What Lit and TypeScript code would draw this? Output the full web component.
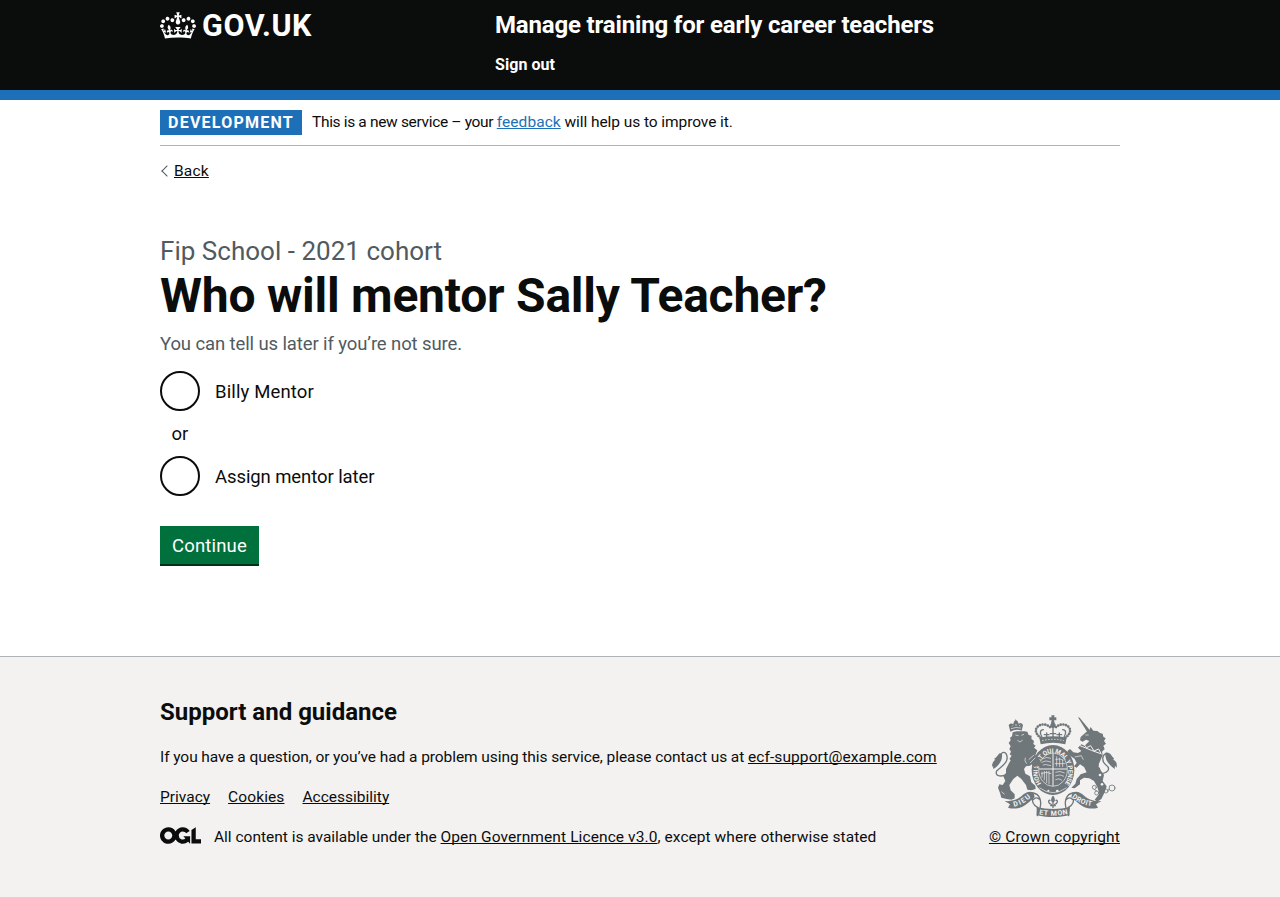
import { LitElement, html, css, svg } from "lit";
import { customElement, property } from "lit/decorators.js";

const CROWN =
  "M25 30.2c3.5 1.5 7.7-.2 9.1-3.7 1.5-3.6-.2-7.8-3.9-9.2-3.6-1.4-7.6.3-9.1 3.9-1.4 3.5.3 7.5 3.9 9zM9 39.5c3.6 1.5 7.8-.2 9.2-3.7 1.5-3.6-.2-7.8-3.9-9.1-3.6-1.5-7.6.2-9.1 3.8-1.4 3.5.3 7.5 3.8 9zM4.4 57.2c3.5 1.5 7.7-.2 9.1-3.8 1.5-3.6-.2-7.7-3.9-9.1-3.5-1.5-7.6.3-9.1 3.8-1.4 3.5.3 7.6 3.9 9.1zm38.3-21.4c3.5 1.5 7.7-.2 9.1-3.8 1.5-3.6-.2-7.7-3.9-9.1-3.6-1.5-7.6.3-9.1 3.8-1.3 3.6.4 7.7 3.9 9.1zm64.4-5.6c-3.6 1.5-7.8-.2-9.1-3.7-1.5-3.6.2-7.8 3.8-9.2 3.6-1.4 7.7.3 9.2 3.9 1.3 3.5-.4 7.5-3.9 9zm15.9 9.3c-3.6 1.5-7.7-.2-9.1-3.7-1.5-3.6.2-7.8 3.7-9.1 3.6-1.5 7.7.2 9.2 3.8 1.5 3.5-.3 7.5-3.8 9zm4.7 17.7c-3.6 1.5-7.8-.2-9.2-3.8-1.5-3.6.2-7.7 3.9-9.1 3.6-1.5 7.7.3 9.2 3.8 1.3 3.5-.4 7.6-3.9 9.1zM89.3 35.8c-3.6 1.5-7.8-.2-9.2-3.8-1.4-3.6.2-7.7 3.9-9.1 3.6-1.5 7.7.3 9.2 3.8 1.4 3.6-.3 7.7-3.9 9.1zM69.7 17.7l8.9 4.7V9.3l-8.9 2.8c-.2-.3-.5-.6-.9-.9L72.4 0H59.6l3.5 11.2c-.3.3-.6.5-.9.9l-8.8-2.8v13.1l8.8-4.7c.3.3.6.7.9.9l-5 15.4v.1c-.2.8-.4 1.6-.4 2.4 0 4.1 3.1 7.5 7 8.1h.2c.3 0 .7.1 1 .1.4 0 .7 0 1-.1h.2c4-.6 7.1-4.1 7.1-8.1 0-.8-.1-1.7-.4-2.4V34l-5.1-15.4c.4-.2.7-.6 1-.9zM66 92.8c16.9 0 32.8 1.1 47.1 3.2 4-16.9 8.9-26.7 14-33.5l-9.6-3.4c1 4.9 1.1 7.2 0 10.2-1.5-1.4-3-4.3-4.2-8.7L108.6 76c2.8-2 5-3.2 7.5-3.3-4.4 9.4-10 11.9-13.6 11.2-4.3-.8-6.3-4.6-5.6-7.9 1-4.7 5.7-5.9 8-.5 4.3-8.7-3-11.4-7.6-8.8 7.1-7.2 7.9-13.5 2.1-21.1-8 6.1-8.1 12.3-4.5 20.8-4.7-5.4-12.1-2.5-9.5 6.2 3.4-5.2 7.9-2 7.2 3.1-.6 4.3-6.4 7.8-13.5 7.2-10.3-.9-10.9-8-11.2-13.8 2.5-.5 7.1 1.8 11 7.3L80.2 60c-4.1 4.4-8 5.3-12.3 5.4 1.4-4.4 8-11.6 8-11.6H55.5s6.4 7.2 7.9 11.6c-4.2-.1-8-1-12.3-5.4l1.4 16.4c3.9-5.5 8.5-7.7 10.9-7.3-.3 5.8-.9 12.8-11.1 13.8-7.2.6-12.9-2.9-13.5-7.2-.7-5 3.8-8.3 7.1-3.1 2.7-8.7-4.6-11.6-9.4-6.2 3.7-8.5 3.6-14.7-4.6-20.8-5.8 7.6-5 13.9 2.2 21.1-4.7-2.6-11.9.1-7.7 8.8 2.3-5.5 7.1-4.2 8.1.5.7 3.3-1.3 7.1-5.7 7.9-3.5.7-9-1.8-13.5-11.2 2.5.1 4.7 1.3 7.5 3.3l-4.7-15.4c-1.2 4.4-2.7 7.2-4.3 8.7-1.1-3-.9-5.3 0-10.2l-9.5 3.4c5 6.9 9.9 16.7 14 33.5 14.8-2.1 30.8-3.2 47.7-3.2z";

const OGL =
  "M421.5 142.8V.1l-50.7 32.3v161.1h112.4v-50.7zm-122.3-9.6A47.12 47.12 0 0 1 221 97.8c0-26 21.1-47.1 47.1-47.1 16.7 0 31.4 8.7 39.7 21.8l42.7-27.2A97.63 97.63 0 0 0 268.1 0c-36.5 0-68.3 20.1-85.1 49.7A98 98 0 0 0 97.8 0C43.9 0 0 43.9 0 97.8s43.9 97.8 97.8 97.8c36.5 0 68.3-20.1 85.1-49.7a97.76 97.76 0 0 0 149.6 25.4l19.4 22.2h3v-87.8h-80l24.3 27.5zM97.8 145c-26 0-47.1-21.1-47.1-47.1s21.1-47.1 47.1-47.1 47.1 21.1 47.1 47.1S123.8 145 97.8 145";

@customElement("royal-arms")
class RoyalArms extends LitElement {
  static styles = css`
    :host { display: block; width: 125px; height: 102px; }
    svg { display: block; width: 125px; height: 102px; }
    .ink { fill: #6f777b; }
    .paper { fill: #f3f2f1; }
    .line { fill: none; stroke: #6f777b; stroke-width: 4; stroke-linecap: round; stroke-linejoin: round; }
    .thin { stroke-width: 2.5; }
    .dots { fill: none; stroke: #6f777b; stroke-width: 8; stroke-linecap: round; stroke-dasharray: 0 8; }
    .cut { fill: none; stroke: #f3f2f1; stroke-width: 3; }
    .fine { stroke-width: 2; }
    text { font: 700 21px "Roboto", sans-serif; fill: #f3f2f1; }
    .motto { font-size: 19px; }
  `;

  private halfCrown() {
    return svg`
      <path class="dots" d="M182 98C168 88 164 76 171 67C182 54 204 56 215 72" />
      <path class="line" d="M186 96C178 84 180 74 190 74M200 98V84M193 89H207" />
    `;
  }

  private fold() {
    return svg`
      <path class="line" d="M158 272C154 292 160 302 174 308L172 332M160 264C178 268 186 284 180 310M160 284C164 278 172 276 180 284" />
    `;
  }

  render() {
    return html`<svg viewBox="36 30 375 306" aria-hidden="true">
      <defs>
        <path id="garter" d="M184 236A46 56 0 1 1 254 236" />
        <path id="ribbon-left" d="M94 306C122 303 138 291 160 271" />
        <path id="ribbon-mid" d="M174 327C204 334 234 334 268 326" />
        <path id="ribbon-right" d="M272 275C296 295 320 304 352 304" />
      </defs>

      <path class="ink" d="M214 31H224L222 37H229V46H222L224 54L219 60L213 54L215 46H208V37H215Z" />
      <circle class="ink" cx="219" cy="61" r="8" />
      <path class="line" d="M219 62V96M211 86H227" />
      ${this.halfCrown()}
      <g transform="matrix(-1 0 0 1 438 0)">${this.halfCrown()}</g>
      <path class="ink" d="M178 98Q219 90 260 98L256 118Q219 108 182 118Z" />
      <path class="cut fine" d="M186 107Q219 99 252 107" stroke-dasharray="5 4" />

      <ellipse class="ink" cx="219" cy="195" rx="64" ry="75" />
      <ellipse class="cut fine" cx="219" cy="194" rx="43" ry="50" />
      <text class="motto"><textPath href="#garter" textLength="238" lengthAdjust="spacing">HONI SOIT QUI MAL Y PENSE</textPath></text>
      <path class="cut" d="M219 145V243M177 192H261" />
      <path class="cut fine" d="M187 162Q200 154 213 160M184 172Q198 164 213 171M182 182Q196 175 213 182M230 154V184M239 158V186M248 164V186M226 164Q240 158 250 166M224 176H256M186 200V218M193 198V226M200 198V234M207 198V238M183 206Q200 198 214 206M226 202Q240 196 254 204M226 213Q240 206 252 214M226 224Q238 218 246 226" />
      <path class="cut fine" d="M178 248Q219 278 260 248" />
      <circle class="paper" cx="205" cy="257" r="3" /><circle class="paper" cx="232" cy="258" r="4" />

      <path class="ink" d="M91 80L86 60C90 54 96 54 100 58C101 50 104 48 106 46L107 42L109 46C112 48 115 50 116 57C120 52 126 54 129 60L125 77Q108 71 91 80Z" />
      <path class="cut fine" d="M93 71Q108 65 123 69M96 64L99 61M108 63V57M117 63L121 60" />
      <path class="ink" d="M98 82L110 79L134 79L142 80L146 90L155 92L154 101L162 108L160 117L167 122L162 128L172 136L166 150L177 160L184 174L190 180L183 188L174 182L162 186L156 178L150 182L138 184L132 192L136 206L150 214L154 232L166 242L167 252L154 256L142 254L138 240L124 222L112 212L100 222L88 240L92 256L104 268L104 280L94 284L80 282L64 278L60 264L54 248L58 238L68 240L76 228L70 214L78 204L78 192L86 176L92 166L88 162L95 152L89 148L93 140L88 132L92 124L86 114L92 106L90 98L96 94Z" />
      <path class="cut fine" d="M106 90L116 92M124 91L132 88M112 106L120 111L128 105M162 150L146 164M166 158L150 174M64 260L74 268M140 176Q132 168 136 158" />
      <path class="line" d="M80 208C60 218 44 212 50 198C62 184 88 174 80 150C76 138 62 140 64 152" />
      <path class="ink" d="M66 148C68 168 56 180 44 190C36 194 40 186 40 182L36 186C36 174 40 168 46 164L42 162C52 156 52 150 60 144Z" />

      <path class="ink" d="M294 37L299 38L331 77L322 82Z" />
      <path class="ink" d="M318 82L328 76L332 66L340 77L352 78L360 84L368 86L370 95L377 100L372 108L378 116L370 122L374 132L366 140L368 150L362 164L356 178L362 196L372 210L368 228L380 244L374 262L364 282L352 290L344 284L358 266L352 246L342 228L328 220L312 218L300 226L300 238L284 250L274 248L286 236L290 222L302 208L320 202L312 186L300 178L290 188L282 184L290 174L284 162L268 150L262 138L270 132L280 142L294 144L304 138L294 128L304 118L314 122L328 108L318 104L308 110L300 106L302 96Z" />
      <path class="cut" d="M300 122L334 136L362 146M308 114L320 128L332 122L342 138L356 132L364 148" />
      <path class="cut fine" d="M316 90L326 90M284 156L304 152L310 164" />
      <path class="line" d="M366 206C386 202 392 190 378 180C364 168 366 150 378 146C386 144 388 152 382 156" />
      <path class="ink" d="M376 143C392 140 394 154 402 160L400 164C408 168 412 174 410 188L405 182L404 192C392 182 374 170 376 143Z" />
      <g class="line thin">
        <circle cx="343" cy="247" r="6" /><circle cx="350" cy="264" r="6" /><circle cx="378" cy="258" r="6" />
        <circle cx="396" cy="249" r="9" /><path d="M344 254L350 258M356 264L372 259M384 256L388 252" />
      </g>
      <circle class="paper" cx="360" cy="184" r="4" /><circle class="paper" cx="360" cy="210" r="4" /><circle class="paper" cx="366" cy="238" r="4" />

      <path class="ink" d="M74 288C96 290 112 284 124 274C136 262 146 258 160 262L164 276C152 286 140 300 126 306C112 312 96 312 84 308L90 298Z" />
      <path class="ink" d="M364 288C342 290 326 284 314 274C302 262 292 258 278 262L274 276C286 286 298 300 312 306C326 312 342 312 354 308L348 298Z" />
      <path class="ink" d="M170 306C200 314 238 314 270 306L268 331C240 338 197 338 170 331Z" />
      ${this.fold()}
      <g transform="matrix(-1 0 0 1 438 0)">${this.fold()}</g>
      <path class="line" d="M219 276V308M212 302H226M219 274C214 282 214 288 219 292C224 288 224 282 219 274M214 298C204 296 204 284 210 286M224 298C234 296 234 284 228 286" />
      <text><textPath href="#ribbon-left" startOffset="8" textLength="58">DIEU</textPath></text>
      <text><textPath href="#ribbon-mid" startOffset="3" textLength="88">ET MON</textPath></text>
      <text><textPath href="#ribbon-right" startOffset="4" textLength="66">DROIT</textPath></text>
    </svg>`;
  }
}

@customElement("mentor-option")
class MentorOption extends LitElement {
  @property() label = "";
  static styles = css`
    :host { display: flex; gap: 15px; height: 40px; line-height: 42px; }
    .ring { box-sizing: border-box; width: 40px; height: 40px; border: 2px solid #0b0c0c; border-radius: 50%; background: #fff; }
  `;
  render() {
    return html`<span class="ring" role="radio" aria-checked="false" aria-label=${this.label}></span><slot></slot>`;
  }
}

@customElement("app-root")
class AppRoot extends LitElement {
  static styles = css`
    :host {
      display: flex; flex-direction: column; min-height: 897px; box-sizing: border-box;
      font: 400 15.5px/20px "Roboto", "Liberation Sans", sans-serif;
      color: #0b0c0c; background: #fff;
    }
    a { color: inherit; text-decoration: underline; text-decoration-thickness: 1px; text-underline-offset: 1px; text-decoration-skip-ink: none; }
    h1, h2, p { margin: 0; font-weight: 400; }
    .wrap { width: 960px; margin: 0 auto; }
    header { background: #0b0c0c; color: #fff; height: 90px; border-bottom: 10px solid #1d70b8; }
    .bar { display: grid; grid-template-columns: 335px 1fr; padding-top: 10px; }
    .logo { display: flex; gap: 6px; font: 700 30.5px/31px "Roboto", sans-serif; letter-spacing: 0.6px; }
    .logo svg { width: 36px; height: 27px; margin-top: 1.5px; fill: #fff; }
    .service { font: 700 24px/30px "Roboto", sans-serif; letter-spacing: -0.167px; }
    .signout { font-size: 16px; font-weight: 700; margin-top: 15px; letter-spacing: 0.05px; }
    .phase { display: flex; gap: 10px; padding: 10px 0; border-bottom: 1px solid #b1b4b6; line-height: 24px; }
    .tag { background: #1d70b8; color: #fff; font-size: 16px; font-weight: 700; line-height: 25px; height: 25px; padding: 0 8px; letter-spacing: 1.242px; }
    .t-new { letter-spacing: -0.33px; }
    .t-feed { color: #1d70b8; letter-spacing: 0.06px; }
    .t-help { letter-spacing: -0.07px; }
    .back { display: flex; align-items: center; gap: 3px; margin-top: 15px; height: 20px; letter-spacing: 0.2px; }
    .chev { box-sizing: border-box; width: 8px; height: 8px; margin-left: 3px; border: solid #505a5f; border-width: 1px 0 0 1px; transform: rotate(-45deg); }
    main { padding-top: 55px; }
    .caption { display: block; font-size: 26px; line-height: 30px; color: #505a5f; letter-spacing: 0.02px; }
    h1 { font-weight: 700; font-size: 48px; line-height: 50px; margin-top: 5px; letter-spacing: -0.235px; }
    .hint { font-size: 18.5px; line-height: 26px; color: #505a5f; margin-top: 10px; letter-spacing: -0.11px; }
    .options { display: flex; flex-direction: column; margin-top: 14px; font-size: 18.5px; }
    .or { line-height: 26px; padding: 10px 0 9px 11.5px; }
    .o-billy { letter-spacing: 0.14px; }
    .o-later { letter-spacing: -0.09px; }
    button { display: block; margin: 30px 0 0; border: 0; padding: 1px 12px 0; width: 99px; height: 38px; background: #00703c; color: #fff; box-shadow: 0 2px 0 #002d18; font: 400 18.5px/38px "Roboto", sans-serif; letter-spacing: 0.17px; white-space: nowrap; }
    footer { flex: 1; margin-top: 92px; background: #f3f2f1; border-top: 1px solid #b1b4b6; }
    .foot { display: flex; justify-content: space-between; align-items: flex-end; padding-top: 40px; }
    h2 { font-weight: 700; font-size: 24px; line-height: 30px; letter-spacing: 0.011px; }
    .q { margin-top: 20px; letter-spacing: -0.075px; }
    .mail { letter-spacing: 0.09px; }
    .links { display: flex; gap: 18px; margin-top: 20px; }
    .l-privacy { letter-spacing: 0; }
    .l-cookies { letter-spacing: 0.11px; }
    .l-access { letter-spacing: 0; }
    .licence { display: flex; gap: 13px; margin-top: 20px; }
    .licence svg { width: 41px; height: 17px; }
    .c-all { letter-spacing: -0.01px; }
    .c-ogl { letter-spacing: 0.1px; }
    .c-rest { letter-spacing: 0.05px; }
    .crown { display: flex; flex-direction: column; align-items: center; gap: 10px; letter-spacing: 0.16px; white-space: nowrap; }
  `;

  render() {
    return html`
      <header>
        <div class="wrap bar">
          <div class="logo">
            <svg viewBox="0 0 132 97" aria-hidden="true"><path fill-rule="evenodd" d=${CROWN} /></svg>
            <span>GOV.UK</span>
          </div>
          <div>
            <div class="service">Manage training for early career teachers</div>
            <div class="signout">Sign out</div>
          </div>
        </div>
      </header>
      <div class="wrap">
        <div class="phase">
          <span class="tag">DEVELOPMENT</span>
          <span><span class="t-new">This is a new service – your </span><a class="t-feed">feedback</a><span class="t-help"> will help us to improve it.</span></span>
        </div>
        <div class="back"><span class="chev"></span><a>Back</a></div>
        <main>
          <span class="caption">Fip School - 2021 cohort</span>
          <h1>Who will mentor Sally Teacher?</h1>
          <p class="hint">You can tell us later if you’re not sure.</p>
          <div class="options">
            <mentor-option label="Billy Mentor"><span class="o-billy">Billy Mentor</span></mentor-option>
            <div class="or">or</div>
            <mentor-option label="Assign mentor later"><span class="o-later">Assign mentor later</span></mentor-option>
          </div>
          <button>Continue</button>
        </main>
      </div>
      <footer>
        <div class="wrap foot">
          <div>
            <h2>Support and guidance</h2>
            <p class="q">If you have a question, or you’ve had a problem using this service, please contact us at <a class="mail">ecf-support@example.com</a></p>
            <div class="links"><a class="l-privacy">Privacy</a><a class="l-cookies">Cookies</a><a class="l-access">Accessibility</a></div>
            <div class="licence">
              <svg viewBox="0 0 483.2 195.7" aria-hidden="true"><path fill="#0b0c0c" d=${OGL} /></svg>
              <span><span class="c-all">All content is available under the </span><a class="c-ogl">Open Government Licence v3.0</a><span class="c-rest">, except where otherwise stated</span></span>
            </div>
          </div>
          <div class="crown"><royal-arms></royal-arms><a>© Crown copyright</a></div>
        </div>
      </footer>
    `;
  }
}
